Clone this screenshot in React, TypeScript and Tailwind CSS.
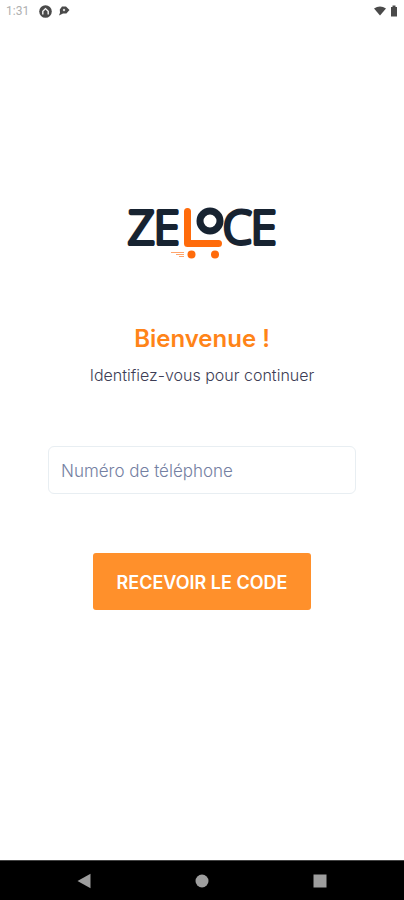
import { useState } from "react";
import type { FormEvent } from "react";

function StatusBar() {
    return (
        <header className="flex h-[22px] items-center justify-between px-1.5">
            <div className="flex items-center gap-1.5">
                <span className="mr-1 font-['Roboto'] text-xs leading-4 text-[#b0b0b0]">1:31</span>
                <svg className="h-[13px] w-[13px]" viewBox="0 0 13 13" aria-hidden="true">
                    <circle cx="6.5" cy="6.5" r="6.3" fill="#4a4a4a" />
                    <path d="M3.8 9.4V6.2L6.5 3.6 9.2 6.2V9.4" fill="none" stroke="#f5f5f5" strokeWidth="1.4" />
                </svg>
                <svg className="h-3 w-3" viewBox="0 0 12 12" aria-hidden="true">
                    <path d="M4 1.5h4l3.5 3.5L8.4 8.5H5L1 10.5 2 7.8 1.8 4.5z" fill="#4a4a4a" />
                    <circle cx="6" cy="5" r="1.2" fill="#d8d8d8" />
                </svg>
            </div>
            <div className="flex items-center gap-1">
                <svg className="h-3 w-3" viewBox="0 0 12 12" aria-hidden="true">
                    <path d="M0 3.4Q6 -0.6 12 3.4L6 10.5z" fill="#4a4a4a" />
                </svg>
                <svg className="h-3 w-2" viewBox="0 0 8 12" aria-hidden="true">
                    <path d="M2.5 0.5h3V2H7v9.5H1V2h1.5z" fill="#4a4a4a" />
                </svg>
            </div>
        </header>
    );
}

function Logo() {
    return (
        <svg className="h-20 w-40" viewBox="-2 -16 160 80" role="img" aria-label="Zeloce">
            <g
                className="font-['Open_Sans',sans-serif] text-[46px] leading-none font-light"
                fill="#172331"
                stroke="#172331"
                strokeWidth="4"
                strokeLinejoin="round"
            >
                <text x="4" y="41">Z</text>
                <text x="30" y="41">E</text>
                <text x="99" y="41">C</text>
                <text x="127" y="41">E</text>
            </g>
            <circle cx="86" cy="18" r="10" fill="none" stroke="#172331" strokeWidth="7" />
            <path
                d="M63.500 8.5v32h31"
                fill="none"
                stroke="#ff6b0b"
                strokeWidth="7"
                strokeLinecap="round"
                strokeLinejoin="round"
            />
            <circle cx="67.500" cy="51.5" r="4" fill="#ff6b0b" />
            <circle cx="91" cy="51.5" r="4" fill="#ff6b0b" />
            <path d="M47 49.5h13M52 51.5h8M55 53.5h5" stroke="#ff6b0b" strokeWidth="1" opacity="0.6" />
        </svg>
    );
}

function NavBar() {
    return (
        <nav className="flex h-10 items-center justify-around border-t border-[#444] bg-black px-[25px]">
            <button type="button" aria-label="Retour" className="p-2">
                <svg className="h-4 w-4" viewBox="0 0 16 16" fill="#9e9e9e">
                    <path d="M1.5 8 14.5 0.8v14.4z" />
                </svg>
            </button>
            <button type="button" aria-label="Accueil" className="p-2">
                <svg className="h-4 w-4" viewBox="0 0 16 16" fill="#9e9e9e">
                    <circle cx="8" cy="8" r="6.5" />
                </svg>
            </button>
            <button type="button" aria-label="Applications récentes" className="p-2">
                <svg className="h-4 w-4" viewBox="0 0 16 16" fill="#9e9e9e">
                    <rect x="1.5" y="1.5" width="13" height="13" />
                </svg>
            </button>
        </nav>
    );
}

export default function App() {
    const [phone, setPhone] = useState("");

    function onSubmit(e: FormEvent) {
        e.preventDefault();
    }

    return (
        <div className="flex min-h-screen flex-col bg-white font-['Inter',sans-serif]">
            <StatusBar />
            <main className="flex flex-1 flex-col items-center px-12 pt-[165px] text-center">
                <Logo />
                <h1 className="mt-14 text-2xl leading-8 font-semibold text-[#ff8418]">Bienvenue !</h1>
                <p className="mt-2 text-base leading-6 font-light text-[#3d3d55]">Identifiez-vous pour continuer</p>
                <form onSubmit={onSubmit} className="mt-[59px] flex w-full flex-col items-center gap-[59px]">
                    <input
                        type="tel"
                        aria-label="Numéro de téléphone"
                        placeholder="Numéro de téléphone"
                        value={phone}
                        onChange={(e) => setPhone(e.target.value)}
                        className="h-12 w-full rounded-md border border-[#e8eef2] px-3 pt-0.5 text-[17px] font-light placeholder:text-[#7480a2]"
                    />
                    <button
                        type="submit"
                        className="h-[57px] cursor-pointer rounded-[3px] bg-[#ff902b] px-6 pt-0.5 text-lg font-semibold text-white"
                    >
                        RECEVOIR LE CODE
                    </button>
                </form>
            </main>
            <NavBar />
        </div>
    );
}
